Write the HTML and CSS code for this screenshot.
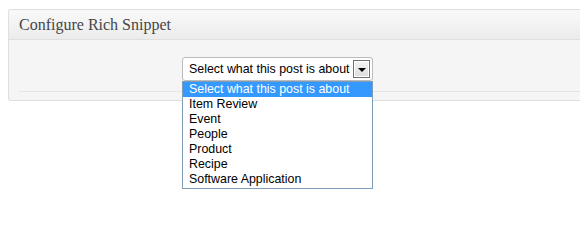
FILE: index.html
```html
<!DOCTYPE html>
<html lang="en">
<head>
    <meta charset="UTF-8">
    <title>Configure Rich Snippet</title>
    <link rel="stylesheet" href="styles.css">
</head>
<body>
    <!-- Meta box -->
    <div class="postbox">
        <h3 class="postbox-title">Configure Rich Snippet</h3>
        <div class="inside">
            <div class="select-row">
                <div class="fake-select">
                    <span class="select-value">Select what this post is about</span>
                    <span class="select-arrow"></span>

                    <!-- Open dropdown list -->
                    <ul class="select-list">
                        <li class="selected">Select what this post is about</li>
                        <li>Item Review</li>
                        <li>Event</li>
                        <li>People</li>
                        <li>Product</li>
                        <li>Recipe</li>
                        <li>Software Application</li>
                    </ul>
                </div>
            </div>
            <div class="divider"></div>
        </div>
    </div>
</body>
</html>
```

FILE: styles.css
```css
body {
    margin: 0;
    padding: 9px 0 0 8px;
    min-height: 243px;
    background-color: #fff;
    font-family: "Liberation Sans", Arial, sans-serif;
}

.postbox {
    border: 1px solid #dfdfdf;
    border-right: none;
    border-radius: 3px 0 0 3px;
    background-color: #f5f5f5;
}

.postbox-title {
    margin: 0;
    height: 29px;
    padding: 0 10px;
    border-bottom: 1px solid #dfdfdf;
    background: linear-gradient(to bottom, #f9f9f9, #ececec);
    font-family: "Liberation Serif", Georgia, serif;
    font-size: 16px;
    font-weight: normal;
    line-height: 29px;
    color: #464646;
    border-radius: 3px 0 0 0;
}

.inside {
    padding: 17px 0 8px 10px;
}

.select-row {
    padding-left: 163px;
    height: 24px;
}

.fake-select {
    position: relative;
    display: flex;
    align-items: center;
    width: 189px;
    height: 22px;
    border: 1px solid #bbb;
    border-radius: 3px;
    background-color: #fff;
}

.select-value {
    flex: 1;
    padding-left: 6px;
    font-size: 12.4px;
    color: #000;
    white-space: nowrap;
}

.select-arrow {
    position: relative;
    width: 15px;
    height: 16px;
    margin-right: 2px;
    border: 1px solid #707070;
    background: linear-gradient(to bottom, #f4f4f4, #dcdcdc);
    box-shadow: inset 0 0 0 1px #fff;
}

.select-arrow::after {
    content: "";
    position: absolute;
    left: 4px;
    top: 7px;
    border-left: 4px solid transparent;
    border-right: 4px solid transparent;
    border-top: 4px solid #000;
}

.select-list {
    position: absolute;
    left: -1px;
    top: 23px;
    width: 189px;
    margin: 0;
    padding: 0 0 1px 0;
    list-style: none;
    background-color: #fff;
    border: 1px solid #7f9db9;
    z-index: 2;
}

.select-list li {
    height: 15px;
    padding-left: 6px;
    font-size: 12.4px;
    line-height: 15px;
    color: #000;
    white-space: nowrap;
}

.select-list li.selected {
    background-color: #3399ff;
    color: #fff;
}

.divider {
    margin-top: 10px;
    height: 1px;
    background-color: #e4e4e4;
}
```
